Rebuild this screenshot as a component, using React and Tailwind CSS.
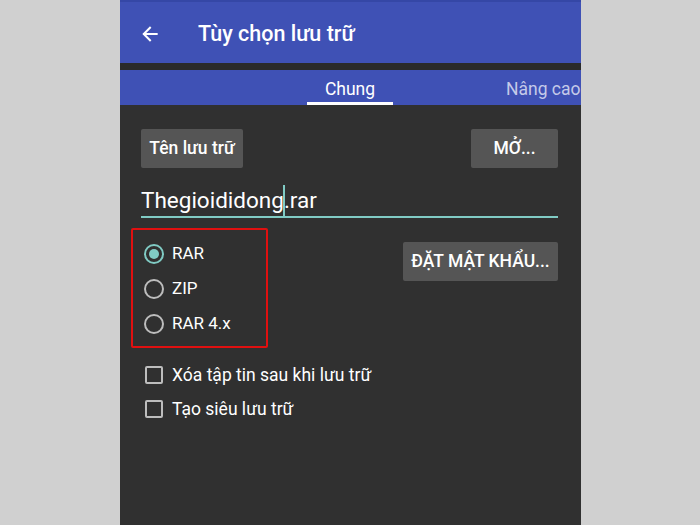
export default function App() {
  return (
    <div className="w-[700px] h-[525px] bg-[#d0d0d0] flex pl-[120px]" style={{ fontFamily: "Roboto, 'Noto Sans', sans-serif" }}>
      <div className="w-[461px] h-full bg-[#303030] flex flex-col">
        <div className="h-[63px] bg-[#3f51b5] border-t-2 border-[#3547a6] flex items-center pt-[3px]">
          <svg width="20" height="20" viewBox="0 0 24 24" className="ml-[20px]" fill="none" stroke="white" strokeWidth="2.4" strokeLinecap="square">
            <path d="M20 12H5" />
            <path d="M12 4.5L4.5 12L12 19.5" />
          </svg>
          <span className="ml-[38px] text-white text-[21.5px] font-medium">Tùy chọn lưu trữ</span>
        </div>
        <div className="h-[7px] bg-[#2a2a2a]" />
        <div className="h-[35px] bg-[#3f51b5] relative overflow-hidden flex">
          <div className="absolute left-[187px] w-[86px] top-0 h-full flex flex-col items-center">
            <span className="text-white text-[17.5px] mt-[6px]">Chung</span>
            <div className="mt-auto h-[3px] w-full bg-white" />
          </div>
          <span className="absolute left-[386px] top-[6px] text-[#c5cae9] text-[17.5px] whitespace-nowrap">Nâng cao</span>
        </div>
        <div className="pl-[21px] pr-[23px] pt-[24px] flex flex-col">
          <div className="flex justify-between">
            <div className="h-[39px] w-[102px] bg-[#555555] rounded-[2px] flex items-center justify-center text-white text-[17.5px] font-medium">Tên lưu trữ</div>
            <div className="h-[39px] w-[87px] bg-[#555555] rounded-[2px] flex items-center justify-center text-white text-[17.5px] font-medium">MỞ...</div>
          </div>
          <div className="mt-[17px] h-[33px] border-b-2 border-[#80cbc4] flex items-start relative">
            <span className="text-white text-[22.5px] leading-[30px]">Thegioididong</span>
            <span className="w-[2px] h-[31px] bg-[#80cbc4] -mx-[1px]" />
            <span className="text-white text-[22.5px] leading-[30px]">.rar</span>
          </div>
          <div className="flex justify-between mt-[10px]">
            <div className="-ml-[10px] w-[137px] h-[120px] border-2 border-[#e01010] rounded-[2px] flex flex-col pl-[11px] pt-[14px] gap-[15px]">
              {["RAR", "ZIP", "RAR 4.x"].map((l, i) => (
                <div key={l} className="flex items-center h-[20px]">
                  <div className={`w-[20px] h-[20px] rounded-full border-2 flex items-center justify-center ${i === 0 ? "border-[#80cbc4]" : "border-[#bdbdbd]"}`}>
                    {i === 0 && <div className="w-[10px] h-[10px] rounded-full bg-[#80cbc4]" />}
                  </div>
                  <span className="ml-[8px] text-white text-[17px]">{l}</span>
                </div>
              ))}
            </div>
            <div className="mt-[14px] h-[39px] w-[155px] bg-[#555555] rounded-[2px] flex items-center justify-center text-white text-[17.5px] font-medium whitespace-nowrap">ĐẶT MẬT KHẨU...</div>
          </div>
          <div className="mt-[18px] flex flex-col gap-[16px] pl-[4px]">
            {["Xóa tập tin sau khi lưu trữ", "Tạo siêu lưu trữ"].map((l) => (
              <div key={l} className="flex items-center h-[18px]">
                <div className="w-[18px] h-[18px] border-2 border-[#bdbdbd] rounded-[2px]" />
                <span className="ml-[9px] text-white text-[17.5px]">{l}</span>
              </div>
            ))}
          </div>
        </div>
      </div>
    </div>
  );
}
